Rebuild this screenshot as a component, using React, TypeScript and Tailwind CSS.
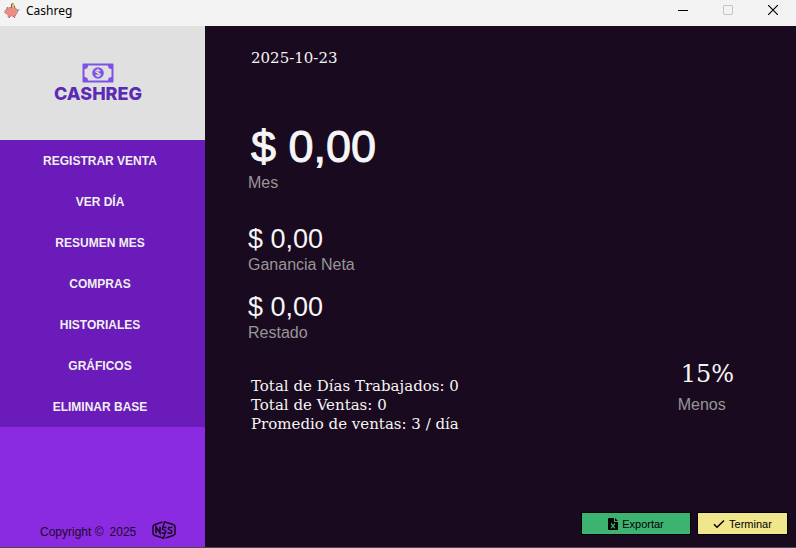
import React from "react";

const menuItems = [
  "REGISTRAR VENTA",
  "VER DÍA",
  "RESUMEN MES",
  "COMPRAS",
  "HISTORIALES",
  "GRÁFICOS",
  "ELIMINAR BASE",
];

const statLines = [
  "Total de Días Trabajados: 0",
  "Total de Ventas: 0",
  "Promedio de ventas: 3 / día",
];

function PigIcon() {
  return (
    <svg width="16" height="16" viewBox="0 0 16 16" aria-hidden="true">
      <path
        d="M3 5.800 2.600 4.200 4.600 4.800C6 4.300 9 4.200 10.500 4.600c2 .6 3 2.200 3 3.800 0 1.800-.8 2.800-2 3.600l-.4 2.400H9.300l-.5-1.400H6.600L6 14.400H4.200l-.4-2.600L1.800 10.400.8 10V7.600h1z"
        fill="#f08c86"
      />
      <path
        d="M3 5.800 2.600 4.200 4.600 4.800C6 4.300 9 4.200 10.500 4.600c2 .6 3 2.200 3 3.800 0 1.800-.8 2.800-2 3.600l-.4 2.400H9.300l-.5-1.400H6.600L6 14.400H4.200l-.4-2.600L1.800 10.400.8 10V7.600h1z"
        fill="none"
        stroke="#5b3a40"
        strokeWidth="0.700"
        strokeDasharray="1 1.400"
      />
      <path d="M13.400 7.500c1 .2 1.300-.4 1.600-1.200" fill="none" stroke="#5b3a40" strokeWidth="0.800" />
      <path d="M7.500 .8H10v4H7.500z" fill="#f2c94c" />
      <path d="M7.500 4.800V1.200L9.500 .4M10.400 2.500v2" fill="none" stroke="#4a4030" strokeWidth="0.800" />
    </svg>
  );
}

function BanknoteIcon() {
  return (
    <svg width="32" height="20" viewBox="0 0 32 20" aria-hidden="true">
      <rect x="0.500" y="0.500" width="31" height="19" rx="1" fill="#7e51e8" />
      <path
        d="M6 2.500h20a3.500 3.500 0 0 0 3.500 3.500v8a3.500 3.500 0 0 0-3.500 3.500H6A3.500 3.500 0 0 0 2.500 14V6A3.500 3.500 0 0 0 6 2.500z"
        fill="#e0e0e0"
      />
      <circle cx="16" cy="10" r="5.800" fill="#7e51e8" />
      <path
        d="M18.200 8.200c-.3-.8-1.100-1.200-2.200-1.200-1.300 0-2.200.6-2.200 1.500 0 2.200 4.500.8 4.500 3 0 .9-.9 1.500-2.300 1.500-1.200 0-2-.5-2.300-1.300M16 5.800V14.200"
        fill="none"
        stroke="#e0e0e0"
        strokeWidth="1.200"
      />
    </svg>
  );
}

function HexBadge() {
  return (
    <svg width="24" height="18" viewBox="0 0 24 18" fill="none" stroke="#1a0a1f" aria-hidden="true">
      <path
        d="M10.500 1 3 3.500 1 5v8l2 1.500 8.500 2.700 1.500-5M13.500 17 21 14.500l2-1.500V5l-2-1.500L12.500.8 11 6"
        strokeWidth="1.500"
      />
      <path d="M4 12.300V6l4 6V5.700" strokeWidth="1.600" />
      <path d="M14.500 6.500h-3.500L10.300 8l3.700 2-.8 2H9.500M20.500 6.500h-3.600L16.200 8l3.800 2-.8 2h-3.700" strokeWidth="1.400" />
    </svg>
  );
}

function ExcelFileIcon() {
  return (
    <svg width="10" height="12" viewBox="0 0 10 12" aria-hidden="true">
      <path d="M1 0h5v4h4v7a1 1 0 0 1-1 1H1a1 1 0 0 1-1-1V1a1 1 0 0 1 1-1z" fill="#000" />
      <path d="M7 0v3h3z" fill="#000" />
      <path d="m3 5.500 4 4.800M7 5.500 3 10.300" stroke="#3cb371" strokeWidth="1.200" />
    </svg>
  );
}

function CheckIcon() {
  return (
    <svg width="12" height="10" viewBox="0 0 12 10" fill="none" aria-hidden="true">
      <path d="m1 5.200 3 3L11 1.500" stroke="#000" strokeWidth="1.500" />
    </svg>
  );
}

function TitleBar() {
  return (
    <header className="flex h-[26px] shrink-0 items-center justify-between bg-[#f3f3f3] pl-1">
      <div className="flex items-center gap-1.5 pb-1">
        <PigIcon />
        <h1 className="font-['Noto_Sans',sans-serif] text-xs leading-4 text-black">Cashreg</h1>
      </div>
      <div className="flex gap-[15px] pr-2 pb-1.5">
        <button type="button" aria-label="Minimizar" className="flex h-5 w-[30px] items-center justify-center">
          <svg width="10" height="10" viewBox="0 0 10 10">
            <path d="M0 5.500h10" stroke="#000" />
          </svg>
        </button>
        <button type="button" disabled aria-label="Maximizar" className="flex h-5 w-[30px] items-center justify-center">
          <svg width="10" height="10" viewBox="0 0 10 10">
            <rect x="0.500" y="0.500" width="9" height="9" rx="0.500" fill="none" stroke="#c4c4c4" />
          </svg>
        </button>
        <button type="button" aria-label="Cerrar" className="flex h-5 w-[30px] items-center justify-center">
          <svg width="10" height="10" viewBox="0 0 10 10">
            <path d="m0 0 10 10M10 0 0 10" stroke="#000" strokeWidth="1.200" />
          </svg>
        </button>
      </div>
    </header>
  );
}

function Sidebar() {
  return (
    <aside className="flex w-[205px] shrink-0 flex-col bg-[#8a2be2]">
      <div className="flex h-[114px] flex-col items-center justify-center gap-px bg-[#e0e0e0] pt-px pr-[9px]">
        <BanknoteIcon />
        <span className="font-[Inter,sans-serif] text-lg leading-5 font-extrabold text-[#5b2bb5]">CASHREG</span>
      </div>
      <nav className="flex flex-col bg-[#6a1bb9]">
        {menuItems.map((item) => (
          <button
            key={item}
            type="button"
            className="h-[41px] pr-[5px] text-center text-xs font-bold text-[#f0f0f0]"
          >
            {item}
          </button>
        ))}
      </nav>
      <footer className="mt-auto flex items-center gap-4 pb-[5px] pl-10 text-[#1a0a1f]">
        <p className="flex gap-1.5 pt-1 text-xs leading-5">
          <span>Copyright ©</span>
          <span>2025</span>
        </p>
        <HexBadge />
      </footer>
    </aside>
  );
}

function Amount({ value, label }: { value: string; label: string }) {
  return (
    <div className="flex flex-col gap-px">
      <p className="text-[27px] leading-[30px] text-[#f5f5f5]">{value}</p>
      <p className="text-base leading-5 text-[#969696]">{label}</p>
    </div>
  );
}

function Dashboard() {
  return (
    <main className="flex grow flex-col bg-[#1a0a1f] pt-[22px] pr-2 pb-3 pl-[43px]">
      <p className="pl-[3px] font-['DejaVu_Serif',serif] text-[15px] leading-5 text-[#f5f5f5]">2025-10-23</p>
      <section className="mt-[55px]">
        <p className="pb-0.5 pl-[3px] text-[45px] leading-[48px] text-[#f5f5f5] [-webkit-text-stroke:1px_#f5f5f5]">
          $ 0,00
        </p>
        <p className="text-base leading-5 text-[#969696]">Mes</p>
      </section>
      <section className="mt-[31px] flex flex-col gap-[17px]">
        <Amount value="$ 0,00" label="Ganancia Neta" />
        <Amount value="$ 0,00" label="Restado" />
      </section>
      <section className="mt-4 flex items-start justify-between pr-[54px]">
        <div className="pt-[18px] pl-[3px] font-['DejaVu_Serif',serif] text-[15px] leading-[19px] text-[#f5f5f5]">
          {statLines.map((line) => (
            <p key={line}>{line}</p>
          ))}
        </div>
        <div>
          <p className="pl-[3px] font-['DejaVu_Serif',serif] text-2xl leading-[30px] text-[#f5f5f5]">15%</p>
          <p className="mt-1.5 text-base leading-5 text-[#969696]">Menos</p>
        </div>
      </section>
      <div className="mt-auto flex justify-end gap-1.5 text-[11px] leading-4 text-black">
        <button
          type="button"
          className="flex h-[23px] w-[110px] items-center justify-center gap-1 border border-black bg-[#3cb371]"
        >
          <ExcelFileIcon />
          Exportar
        </button>
        <button
          type="button"
          className="flex h-[23px] w-[91px] items-center justify-center gap-1 border border-black bg-[#f0e68c]"
        >
          <CheckIcon />
          Terminar
        </button>
      </div>
    </main>
  );
}

export default function App() {
  return (
    <div className="flex min-h-screen flex-col border-b border-[#4a4a4a] font-['Liberation_Sans',Arial,sans-serif]">
      <TitleBar />
      <div className="flex grow">
        <Sidebar />
        <Dashboard />
      </div>
    </div>
  );
}
